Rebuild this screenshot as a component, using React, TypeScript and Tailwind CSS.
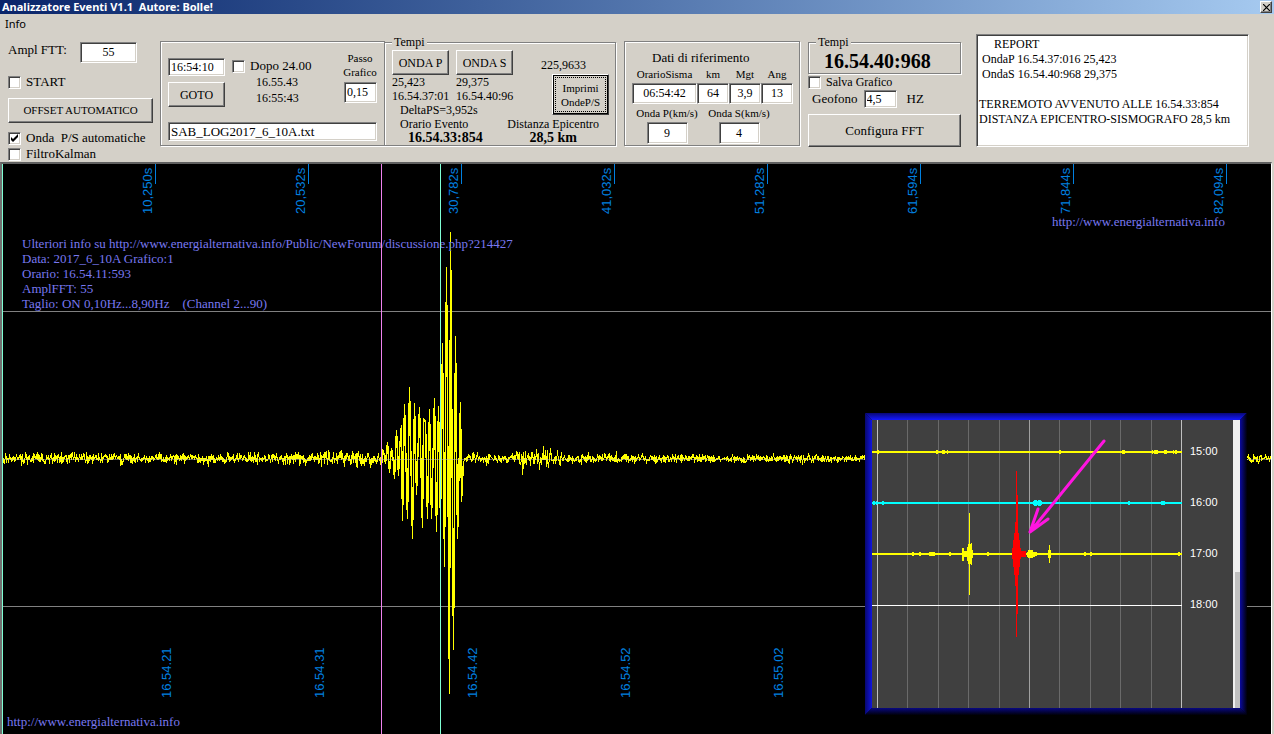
import { useState } from "react";
import type { ButtonHTMLAttributes, InputHTMLAttributes } from "react";
import clsx from "clsx";

const SUNKEN =
  "border border-t-[#808080] border-l-[#808080] border-r-white border-b-white bg-white shadow-[inset_1px_1px_0_#404040,inset_-1px_-1px_0_#d4d0c8]";
const ETCHED = "border border-[#808080] shadow-[1px_1px_0_#fff,inset_1px_1px_0_#fff]";

const REPORT = [
  "     REPORT",
  " OndaP 16.54.37:016 25,423",
  " OndaS 16.54.40:968 29,375",
  "",
  "TERREMOTO AVVENUTO ALLE 16.54.33:854",
  "DISTANZA EPICENTRO-SISMOGRAFO 28,5 km",
].join("\n");

function Field({ className, ...props }: InputHTMLAttributes<HTMLInputElement>) {
  return (
    <input
      type="text"
      className={clsx(SUNKEN, "min-w-0 px-0.5 outline-none", className)}
      {...props}
    />
  );
}

function Button({ className, ...props }: ButtonHTMLAttributes<HTMLButtonElement>) {
  return (
    <button
      type="button"
      className={clsx(
        "shrink-0 border border-t-white border-l-white border-r-[#404040] border-b-[#404040] bg-[#d4d0c8] shadow-[inset_-1px_-1px_0_#808080] whitespace-nowrap",
        className
      )}
      {...props}
    />
  );
}

function Check({
  label,
  initial = false,
  className,
}: {
  label: string;
  initial?: boolean;
  className?: string;
}) {
  const [on, setOn] = useState(initial);

  return (
    <label className={clsx("flex items-center gap-[5px] whitespace-pre", className)}>
      <span className="relative size-[13px] shrink-0">
        <input
          type="checkbox"
          checked={on}
          onChange={(e) => setOn(e.target.checked)}
          className={clsx(SUNKEN, "block size-[13px] appearance-none")}
        />
        {on && (
          <svg viewBox="0 0 13 13" className="pointer-events-none absolute inset-0">
            <path d="M3 5v3l2 2 5-5V2L5 7z" fill="#000" />
          </svg>
        )}
      </span>
      {label}
    </label>
  );
}

/* ---------- signal ---------- */

type Point = [number, number];

const BURST: Point[] = [
  [381, 467], [382, 449], [384, 455], [385, 463], [387, 442], [389, 472], [391, 448],
  [393, 462], [394, 478], [396, 430], [398, 475], [399, 450], [401, 425], [402, 520],
  [404, 404], [407, 518], [409, 387], [412, 538], [414, 403], [416, 494], [419, 407],
  [422, 527], [423, 419], [425, 421], [427, 518], [429, 409], [431, 518], [434, 398],
  [436, 531], [438, 406], [440, 522], [442, 343], [444, 566], [446, 267], [449, 693],
  [450, 232], [453, 649], [455, 336], [457, 538], [460, 402], [461, 501], [463, 461],
];

// background noise amplitude along the trace
function envelope(x: number) {
  if (x > 20 && x < 38) return 7;
  if (x > 112 && x < 124) return 8;
  if (x > 318 && x < 381) return 9;
  if (x > 275 && x < 319) return 7;
  if (x > 514 && x < 562) return 11;
  if (x > 470 && x < 480) return 8;
  if (x < 260) return 6;
  return 5;
}

function noise(from: number, to: number, seed: number) {
  let s = seed;
  const next = () => {
    s = (s * 1103515245 + 12345) % 2147483648;
    return s / 2147483648;
  };
  const pts: Point[] = [];
  for (let x = from; x <= to; x++) {
    // two samples per column
    for (let n = 0; n < 2; n++) {
      const k = next() + next() - 1;
      pts.push([x, Math.round(458 + k * envelope(x) * (next() > 0.9 ? 1.5 : 1))]);
    }
  }
  return pts;
}

function toPoints(pts: Point[]) {
  return pts.map(([x, y]) => `${x + 0.5},${y + 0.5}`).join(" ");
}

const BEFORE = toPoints(noise(3, 380, 7));
const QUAKE = toPoints(BURST);
const AFTER = toPoints(noise(464, 1270, 21));

const SECONDS = ["10,250s", "20,532s", "30,782s", "41,032s", "51,282s", "61,594s", "71,844s", "82,094s"];
const CLOCK = ["16.54.21", "16.54.31", "16.54.42", "16.54.52", "16.55.02"];
const CAPTION = [
  "Ulteriori info su http://www.energialternativa.info/Public/NewForum/discussione.php?214427",
  "Data: 2017_6_10A Grafico:1",
  "Orario: 16.54.11:593",
  "AmplFFT: 55",
  "Taglio: ON 0,10Hz...8,90Hz    (Channel 2...90)",
];

function Blips({ y, color, at }: { y: number; color: string; at: [number, number, number][] }) {
  return (
    <g fill={color}>
      <rect x={872} y={y - 1} width={310} height={2} />
      {at.map(([x, w, h]) => (
        <rect key={x} x={x} y={y - h / 2} width={w} height={h} />
      ))}
    </g>
  );
}

function DayInset() {
  const grid = [907, 938, 968, 999, 1059, 1090, 1120, 1151];

  return (
    <g>
      <defs>
        <linearGradient id="bt" x1="0" y1="0" x2="0" y2="1">
          <stop offset="0" stopColor="#080878" />
          <stop offset="1" stopColor="#1418ff" />
        </linearGradient>
        <linearGradient id="bl" x1="0" y1="0" x2="1" y2="0">
          <stop offset="0" stopColor="#080870" />
          <stop offset="1" stopColor="#1014e0" />
        </linearGradient>
        <linearGradient id="br" x1="0" y1="0" x2="1" y2="0">
          <stop offset="0" stopColor="#0a0aa0" />
          <stop offset="1" stopColor="#000008" />
        </linearGradient>
        <linearGradient id="bb" x1="0" y1="0" x2="0" y2="1">
          <stop offset="0" stopColor="#080880" />
          <stop offset="1" stopColor="#000008" />
        </linearGradient>
      </defs>
      <path d="M865 413H1247L1240 420H872z" fill="url(#bt)" />
      <path d="M865 413L872 420V708L865 715z" fill="url(#bl)" />
      <path d="M1247 413V715L1240 708V420z" fill="url(#br)" />
      <path d="M865 715L872 708H1240L1247 715z" fill="url(#bb)" />
      <rect x={872} y={420} width={368} height={288} fill="#404040" />

      <g shapeRendering="crispEdges">
        {grid.map((x) => (
          <rect key={x} x={x} y={420} width={1} height={288} fill="#6a6a6a" />
        ))}
        <rect x={877} y={420} width={1} height={288} fill="#c0c0c0" />
        <rect x={1029} y={420} width={1} height={288} fill="#a0a0a0" />
        <rect x={1181} y={420} width={1} height={288} fill="#c0c0c0" />
        <rect x={1233} y={420} width={7} height={288} fill="#f0f0f0" />
        <rect x={1235} y={572} width={5} height={136} fill="#c0c0c0" />

        <Blips
          y={452}
          color="#ffff00"
          at={[
            [877, 2, 4], [936, 2, 4], [942, 3, 4], [947, 1, 4], [1059, 2, 4],
            [1122, 3, 4], [1152, 1, 4], [1154, 4, 4], [1164, 3, 4], [1173, 1, 4], [1175, 2, 4],
          ]}
        />
        <Blips
          y={503}
          color="#00ffff"
          at={[
            [873, 2, 4], [876, 1, 4], [882, 2, 4], [1033, 9, 4], [1034, 3, 6],
            [1038, 3, 6], [1128, 2, 4], [1161, 4, 4],
          ]}
        />
        <Blips
          y={554}
          color="#ffff00"
          at={[
            [912, 2, 4], [919, 2, 4], [929, 6, 4], [949, 2, 4], [962, 2, 13], [964, 5, 6],
            [967, 2, 14], [968, 3, 20], [969, 1, 82], [971, 1, 22], [972, 1, 8], [987, 2, 4],
            [1027, 8, 5], [1028, 5, 8], [1035, 2, 4], [1048, 3, 8], [1049, 1, 18],
            [1084, 2, 4], [1090, 2, 4], [1178, 2, 4],
          ]}
        />
        <rect x={872} y={605} width={310} height={1} fill="#fff" />
        <g fill="#ff0000">
          <rect x={1016} y={471} width={1} height={166} />
          <rect x={1016} y={495} width={2} height={119} />
          <rect x={1015} y={522} width={3} height={64} />
          <rect x={1014} y={533} width={5} height={42} />
          <rect x={1013} y={540} width={7} height={27} />
          <rect x={1012} y={548} width={9} height={11} />
          <rect x={1021} y={551} width={5} height={6} />
        </g>
      </g>

      <path
        d="M1104 441L1030 532M1030 532L1038 509M1030 532L1048 519"
        fill="none"
        stroke="#ff14e0"
        strokeWidth={3}
        strokeLinecap="round"
      />

      {["15:00", "16:00", "17:00", "18:00"].map((t, i) => (
        <text key={t} x={1190} y={455 + i * 51} fill="#fff" fontSize={11}>
          {t}
        </text>
      ))}
    </g>
  );
}

function Chart() {
  return (
    <div className="bg-[#d4d0c8] pr-0.5">
      <div className="border-t-2 border-r border-l-2 border-t-[#606060] border-r-white border-l-[#707070] bg-black">
        <svg
          viewBox="2 164 1269 570"
          className="block h-auto w-full font-['Liberation_Sans',sans-serif]"
          role="img"
          aria-label="Grafico"
        >
          <g shapeRendering="crispEdges">
            <rect x={2} y={311} width={1269} height={1} fill="#808080" />
            <rect x={2} y={606} width={1269} height={1} fill="#808080" />
            <g fill="none" stroke="#ffff00">
              <polyline points={BEFORE} />
              <polyline points={QUAKE} strokeWidth={1.5} />
              <polyline points={AFTER} />
            </g>
            <rect x={2} y={459} width={1269} height={1} fill="#c0c0c0" opacity={0.5} />
            {SECONDS.map((s, i) => (
              <rect key={s} x={155 + i * 153} y={164} width={1} height={20} fill="#0080e0" />
            ))}
          </g>

          <g fill="#0080e0" fontSize={13}>
            {SECONDS.map((s, i) => (
              <text key={s} transform={`translate(${152 + i * 153} 214) rotate(-90)`}>
                {s}
              </text>
            ))}
            {CLOCK.map((s, i) => (
              <text key={s} transform={`translate(${171 + i * 153} 698) rotate(-90)`}>
                {s}
              </text>
            ))}
          </g>

          <g fill="#7878f0" fontSize={13} className="font-['Liberation_Serif',serif]">
            {CAPTION.map((line, i) => (
              <text key={line} x={22} y={248 + i * 15} className="whitespace-pre">
                {line}
              </text>
            ))}
            <a href="http://www.energialternativa.info">
              <text x={1052} y={226}>http://www.energialternativa.info</text>
            </a>
            <a href="http://www.energialternativa.info">
              <text x={7} y={726}>http://www.energialternativa.info</text>
            </a>
          </g>

          {/* markers: start, P wave, S wave */}
          <g shapeRendering="crispEdges">
            <rect x={2} y={164} width={1} height={570} fill="#7fffd4" />
            <rect x={381} y={164} width={1} height={570} fill="#ee82ee" />
            <rect x={440} y={164} width={1} height={570} fill="#7fffd4" />
          </g>

          <DayInset />
        </svg>
      </div>
    </div>
  );
}

/* ---------- toolbar ---------- */

function QuakeField({ label, value }: { label: string; value: string }) {
  return (
    <label className="flex flex-col items-center gap-0.5 text-[11px] leading-[14px]">
      {label}
      <Field defaultValue={value} className="h-[21px] w-full text-center text-[12px]" />
    </label>
  );
}

function SpeedField({ label, value }: { label: string; value: string }) {
  return (
    <label className="flex w-[66px] flex-col items-center gap-0.5 text-[11px] leading-[14px] whitespace-nowrap">
      {label}
      <Field defaultValue={value} className="h-[22px] w-[41px] text-center text-[12px]" />
    </label>
  );
}

function Toolbar() {
  return (
    <div className="flex items-start bg-[#d4d0c8] pl-2 text-[13px]">
      <div className="mt-2 flex w-[145px] shrink-0 flex-col">
        <label className="flex h-[21px] items-start justify-between pr-4 leading-4">
          Ampl FTT:
          <Field defaultValue="55" className="h-[21px] w-[57px] text-center text-[12px]" />
        </label>
        <Check label="START" className="mt-[11px] h-4" />
        <Button className="mt-2 h-[25px] text-[11px]">OFFSET AUTOMATICO</Button>
        <Check label="Onda  P/S automatiche" initial className="mt-[7px] h-4" />
        <Check label="FiltroKalman" className="h-4" />
      </div>

      <div className={clsx(ETCHED, "mt-[7px] ml-[7px] w-[225px] shrink-0 px-[7px] pb-1")}>
        <div className="flex">
          <div className="flex w-[57px] flex-col gap-1.5 pt-4">
            <Field aria-label="Orario" defaultValue="16:54:10" className="h-[18px] text-[12px]" />
            <Button className="h-[25px] text-[12px]">GOTO</Button>
          </div>
          <div className="ml-[7px] pt-4 text-[12px] leading-4">
            <Check label="Dopo 24.00" className="h-4 text-[13px]" />
            <p className="pl-6">16.55.43</p>
            <p className="pl-6">16:55:43</p>
          </div>
          <label className="ml-auto flex w-[34px] flex-col items-end pt-[9px] text-[11px] leading-[14px]">
            <span className="text-center">Passo Grafico</span>
            <Field defaultValue="0,15" className="mt-[3px] h-[21px] w-[33px] text-[12px]" />
          </label>
        </div>
        <Field
          aria-label="File"
          defaultValue="SAB_LOG2017_6_10A.txt"
          className="mt-[15px] block h-[19px] w-full"
        />
      </div>

      <fieldset
        className={clsx(
          ETCHED,
          "mt-px -ml-px flex w-[232px] shrink-0 justify-between pr-1.5 pl-[7px] text-[12px] leading-[14px] whitespace-nowrap"
        )}
      >
        <legend className="bg-[#d4d0c8] px-0.5">Tempi</legend>
        <div className="pt-px">
          <div className="grid grid-cols-[57px_57px] gap-x-[7px]">
            <Button className="h-[25px]">ONDA P</Button>
            <Button className="h-[25px]">ONDA S</Button>
            <span>25,423</span>
            <span>29,375</span>
            <span>16.54.37:01</span>
            <span>16.54.40:96</span>
          </div>
          <div className="pl-2">
            <p>DeltaPS=3,952s</p>
            <p>Orario Evento</p>
            <p className="pl-2 text-[14px] leading-[14px] font-bold">16.54.33:854</p>
          </div>
        </div>
        <div className="flex w-24 flex-col items-end pt-[9px]">
          <p className="pr-[23px]">225,9633</p>
          <Button className="mt-0.5 mb-0.5 h-[41px] w-[57px] p-0.5 text-[11px] ring-1 ring-black ring-inset">
            <span className="flex h-full items-center justify-center border border-dotted border-black">
              Imprimi
              <br />
              OndeP/S
            </span>
          </Button>
          <p className="pr-2.5">Distanza Epicentro</p>
          <p className="pr-8 text-[14px] leading-[14px] font-bold">28,5 km</p>
        </div>
      </fieldset>

      <div className={clsx(ETCHED, "mt-[7px] ml-2 w-[176px] shrink-0 pt-[9px] pb-px pl-[7px]")}>
        <p className="pl-5 leading-[14px]">Dati di riferimento</p>
        <div className="mt-0.5 grid grid-cols-[65px_32px_32px_32px]">
          <QuakeField label="OrarioSisma" value="06:54:42" />
          <QuakeField label="km" value="64" />
          <QuakeField label="Mgt" value="3,9" />
          <QuakeField label="Ang" value="13" />
        </div>
        <div className="mt-0.5 flex gap-1.5 pl-0.5">
          <SpeedField label="Onda P(km/s)" value="9" />
          <SpeedField label="Onda S(km/s)" value="4" />
        </div>
      </div>

      <div className="mt-px ml-2 flex w-[153px] shrink-0 flex-col">
        <fieldset className={clsx(ETCHED, "px-[7px]")}>
          <legend className="bg-[#d4d0c8] px-0.5 text-[12px] leading-[14px]">Tempi</legend>
          <p className="pl-2 text-[20px] leading-6 font-bold">16.54.40:968</p>
        </fieldset>
        <Check label="Salva Grafico" className="h-4 text-[12px]" />
        <div className="flex h-[18px] items-center pl-1">
          <label className="flex items-center gap-1.5">
            Geofono
            <Field defaultValue="4,5" className="h-[18px] w-[33px] text-[12px]" />
          </label>
          <span className="ml-2.5">HZ</span>
        </div>
        <Button className="mt-1.5 h-[33px]">Configura FFT</Button>
      </div>

      <textarea
        aria-label="Report"
        defaultValue={REPORT}
        className={clsx(
          SUNKEN,
          "mr-[25px] ml-[15px] h-[113px] min-w-0 flex-1 resize-none overflow-hidden px-0.5 py-0.5 text-[12px] leading-[15px] whitespace-pre outline-none"
        )}
      />
    </div>
  );
}

export default function App() {
  return (
    <div className="bg-[#d4d0c8] font-['Liberation_Serif',serif] text-black">
      <header className="flex h-3.5 items-center justify-between bg-linear-to-r from-[#0a246a] to-[#a6caf0] px-0.5 font-['Noto_Sans',sans-serif] text-[11px] leading-[14px]">
        <h1 className="font-bold whitespace-pre text-white">
          Analizzatore Eventi V1.1{"  "}Autore: Bolle!
        </h1>
        <Button aria-label="Chiudi" className="flex size-3 items-center justify-center">
          <svg viewBox="0 0 7 7" className="size-[7px]">
            <path d="M0 0l7 7M7 0L0 7" stroke="#000" strokeWidth={1.2} />
          </svg>
        </Button>
      </header>
      <nav className="flex h-5 items-center px-[5px] font-['Noto_Sans',sans-serif] text-[11px]">
        <button type="button">Info</button>
      </nav>
      <Toolbar />
      <Chart />
    </div>
  );
}
